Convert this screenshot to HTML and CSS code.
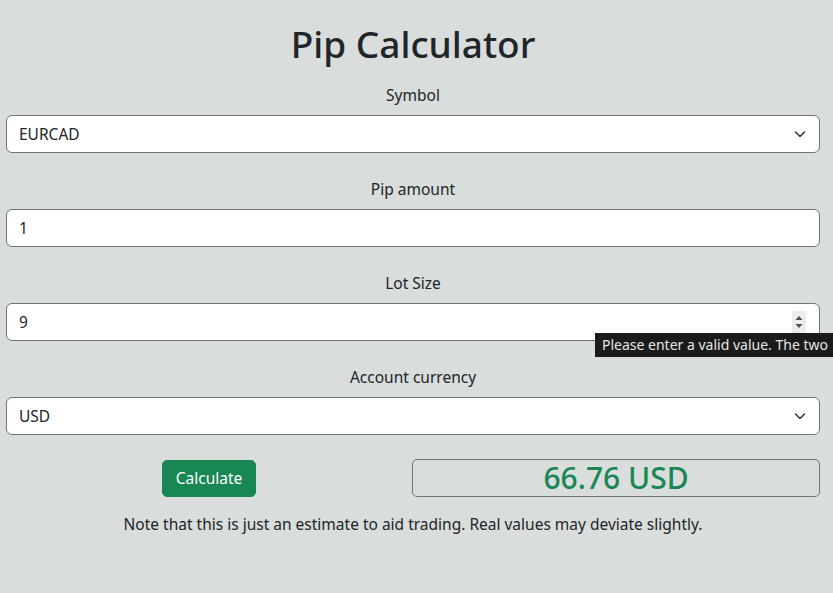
FILE: index.html
```html
<!DOCTYPE html>
<html lang="en">
<head>
<meta charset="utf-8">
<title>Pip Calculator</title>
<link rel="stylesheet" href="styles.css">
</head>
<body>
<main class="page">
  <h1 class="title">Pip Calculator</h1>
  <form class="form">
    <div class="field">
      <label class="label" for="symbol">Symbol</label>
      <div class="select-wrap">
        <select id="symbol" class="control select"><option>EURCAD</option></select>
        <svg class="chevron" width="16" height="16" viewBox="0 0 16 16"><path d="m3.5 6 4.5 4.5 4.5-4.5" fill="none" stroke="#343a40" stroke-width="1.6" stroke-linecap="round" stroke-linejoin="round"/></svg>
      </div>
    </div>
    <div class="field">
      <label class="label" for="pips">Pip amount</label>
      <input id="pips" class="control" type="text" value="1">
    </div>
    <div class="field">
      <label class="label" for="lot">Lot Size</label>
      <div class="select-wrap">
        <input id="lot" class="control" type="text" value="9">
        <svg class="spinner" width="14" height="22" viewBox="0 0 14 22"><rect width="14" height="22" fill="#ececec"/><path d="M3.5 9 7 5 10.5 9z" fill="#505050"/><path d="M3.5 13 7 17 10.5 13z" fill="#505050"/></svg>
        <div class="tooltip">Please enter a valid value. The two</div>
      </div>
    </div>
    <div class="field">
      <label class="label" for="currency">Account currency</label>
      <div class="select-wrap">
        <select id="currency" class="control select"><option>USD</option></select>
        <svg class="chevron" width="16" height="16" viewBox="0 0 16 16"><path d="m3.5 6 4.5 4.5 4.5-4.5" fill="none" stroke="#343a40" stroke-width="1.6" stroke-linecap="round" stroke-linejoin="round"/></svg>
      </div>
    </div>
    <div class="actions">
      <div class="action-col"><button type="button" class="btn">Calculate</button></div>
      <div class="result">66.76 USD</div>
    </div>
    <p class="note">Note that this is just an estimate to aid trading. Real values may deviate slightly.</p>
  </form>
</main>
</body>
</html>
```
FILE: styles.css
```css
html, body {
  margin: 0;
  padding: 0;
  overflow: hidden;
}
body {
  background: #d9dddc;
  color: #212529;
  font-family: "Noto Sans", "Open Sans", sans-serif;
  font-size: 16px;
  line-height: 1.5;
}
.page {
  padding: 22px 13px 0 6px;
}
.title {
  margin: 0 0 17px;
  text-align: center;
  font-size: 37px;
  font-weight: 500;
  line-height: 1.2;
}
.form {
  display: flex;
  flex-direction: column;
}
.field {
  display: flex;
  flex-direction: column;
  margin-bottom: 24px;
}
.label {
  text-align: center;
  margin-bottom: 8px;
  line-height: 24px;
  font-size: 15.5px;
}
.select-wrap {
  position: relative;
}
.control {
  box-sizing: border-box;
  width: 100%;
  height: 38px;
  padding: 0 12px;
  font: inherit;
  font-size: 15.5px;
  color: #212529;
  background: #fff;
  border: 1px solid #6c757d;
  border-radius: 6px;
  outline: none;
  appearance: none;
  -webkit-appearance: none;
}
.chevron {
  position: absolute;
  right: 12px;
  top: 11px;
  pointer-events: none;
}
.spinner {
  position: absolute;
  right: 14px;
  top: 8px;
}
.tooltip {
  position: absolute;
  left: 589px;
  top: 30px;
  height: 24px;
  padding: 0 20px 0 7px;
  background: #1b1b1b;
  color: #e6e6e6;
  font-size: 14px;
  line-height: 24px;
  white-space: nowrap;
}
.actions {
  display: grid;
  grid-template-columns: 406px 1fr;
  align-items: center;
}
.action-col {
  display: flex;
  justify-content: center;
}
.btn {
  height: 37px;
  padding: 0 13px;
  background: #198754;
  color: #fff;
  border: 1px solid #198754;
  border-radius: 5px;
  font: inherit;
  font-size: 15.5px;
}
.result {
  box-sizing: border-box;
  height: 38px;
  border: 1px solid #6c757d;
  border-radius: 5px;
  color: #198754;
  font-size: 30px;
  font-weight: 500;
  text-align: center;
  line-height: 36px;
}
.note {
  margin: 16px 0 0;
  text-align: center;
  font-size: 15.5px;
}
```
